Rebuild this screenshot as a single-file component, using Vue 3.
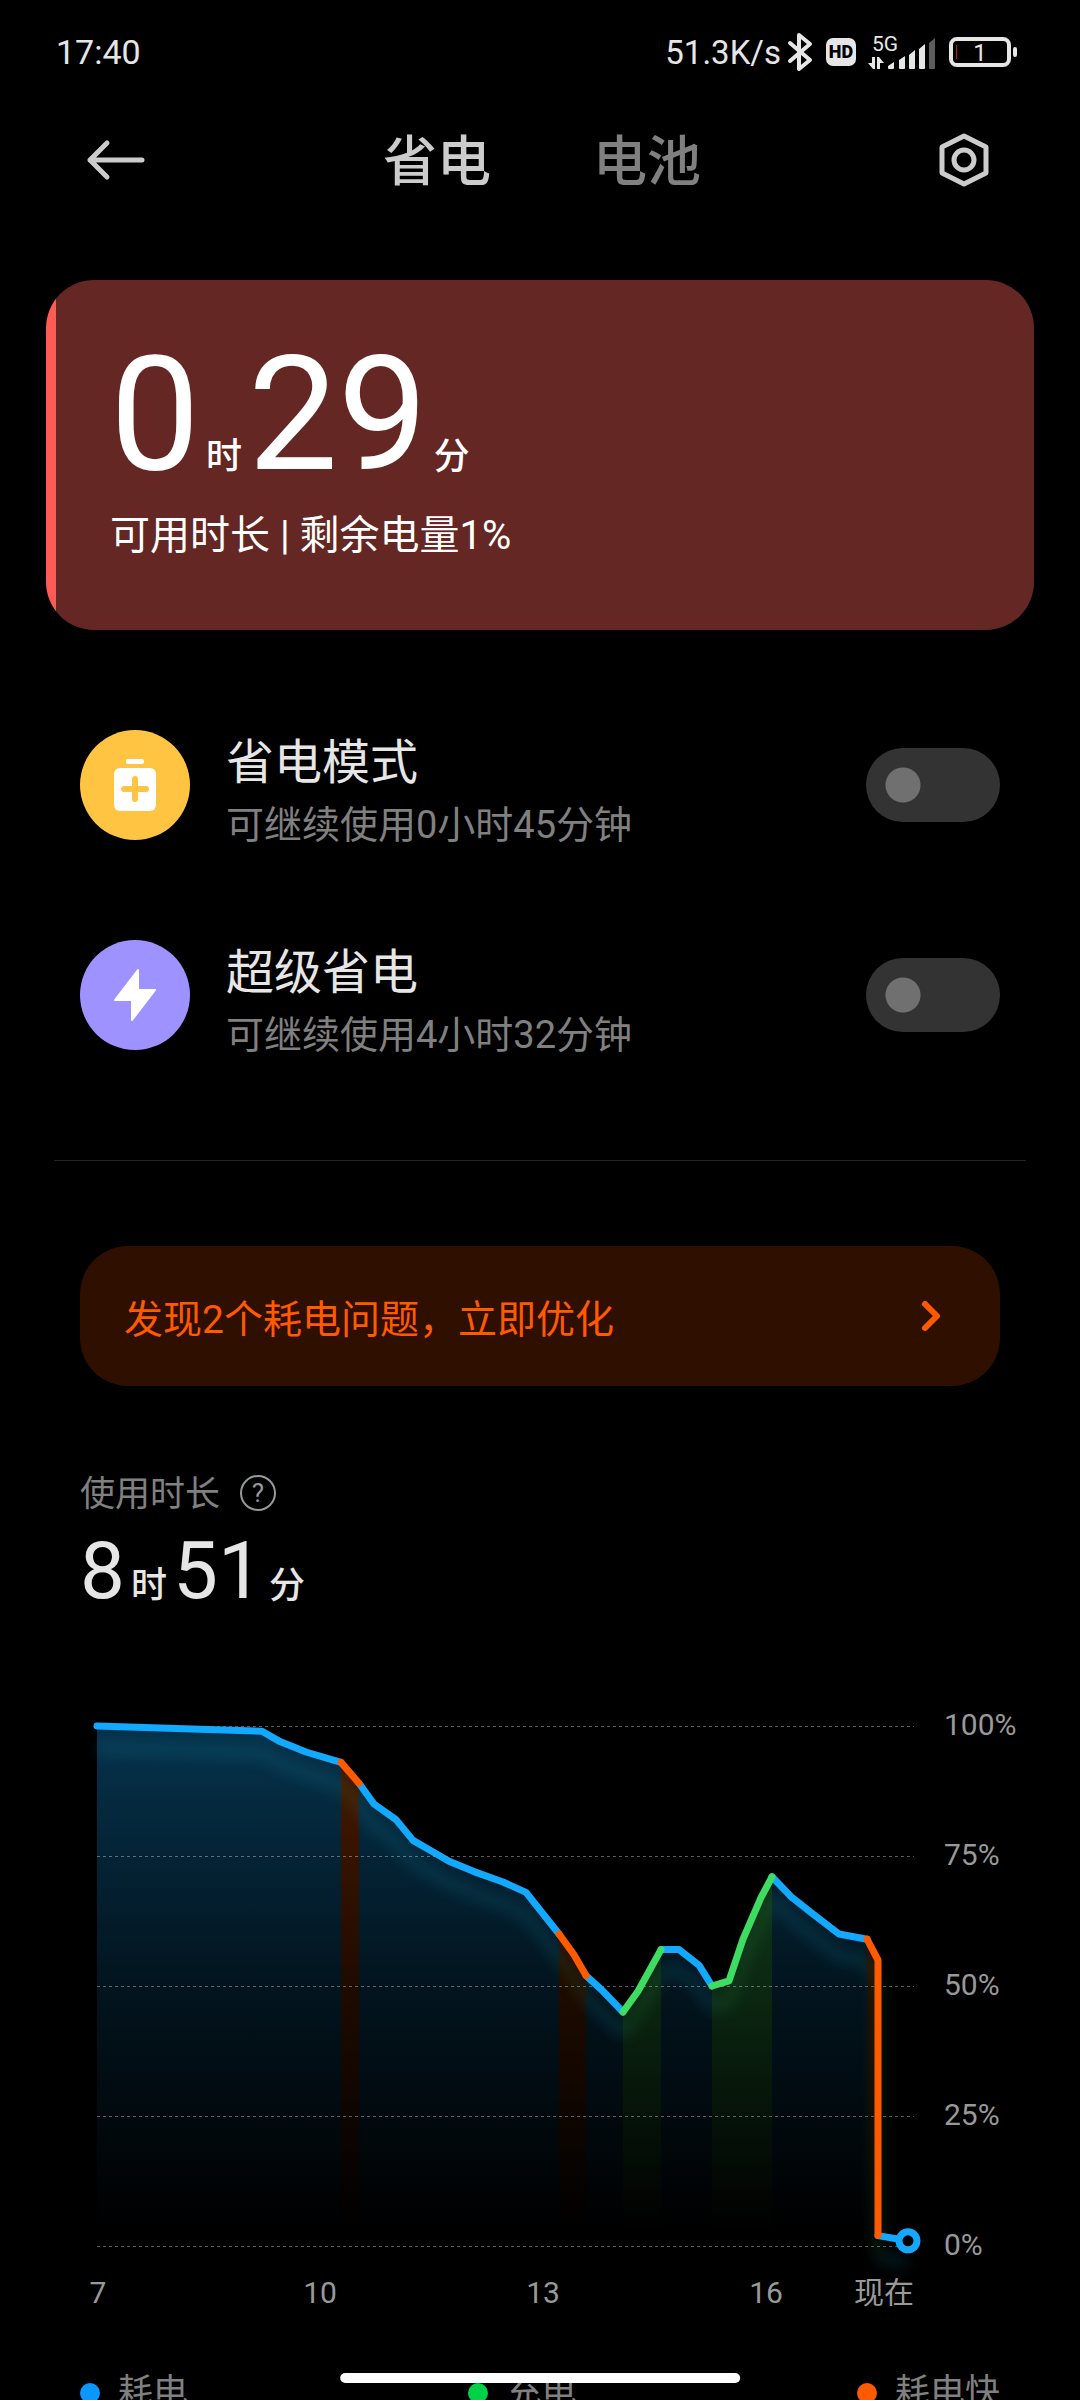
<script setup>
import { computed, ref } from 'vue'

const modes = ref([
  { id: 'saver', title: '省电模式', note: '可继续使用0小时45分钟', color: '#ffc542', on: false },
  { id: 'ultra', title: '超级省电', note: '可继续使用4小时32分钟', color: '#9d92ff', on: false },
])

const kinds = {
  drain: { color: '#12a9ff', top: 0.3, middle: 0.12 },
  fast: { color: '#ff5a00', top: 0.3, middle: 0.12 },
  charge: { color: '#3fdc62', top: 0.34, middle: 0.18 },
}

// Each point is [x, battery level]; a run shares its last point with the next run.
const runs = [
  { kind: 'drain', points: [[17, 100], [182, 99], [200, 97], [226, 95], [261, 93]] },
  { kind: 'drain', points: [[279, 89], [294, 85], [316, 82], [333, 78], [351, 76], [369, 74], [394, 72], [423, 70], [446, 68], [479, 60]] },
  { kind: 'drain', points: [[506, 52], [523, 49], [543, 45]] },
  { kind: 'drain', points: [[581, 57], [599, 57], [619, 54], [632, 50]] },
  { kind: 'drain', points: [[692, 71], [712, 67], [732, 64], [759, 60], [787, 59]] },
  { kind: 'drain', points: [[798, 2], [828, 1]] },
  { kind: 'charge', points: [[543, 45], [558, 49], [581, 57]] },
  { kind: 'charge', points: [[632, 50], [649, 51], [663, 59], [681, 67], [692, 71]] },
  { kind: 'fast', points: [[261, 93], [279, 89]] },
  { kind: 'fast', points: [[479, 60], [494, 56], [506, 52]] },
  { kind: 'fast', points: [[787, 59], [798, 55], [798, 2]] },
]

const BASE = 546
const levelY = (level) => BASE - (level * 52) / 10

const lines = computed(() =>
  runs.map((run) => {
    const coords = run.points.map(([x, level]) => `${x},${levelY(level)}`)
    const first = run.points[0][0]
    const last = run.points[run.points.length - 1][0]
    return {
      kind: run.kind,
      color: kinds[run.kind].color,
      line: coords.join(' '),
      area: `${first},${BASE} ${coords.join(' ')} ${last},${BASE}`,
    }
  }),
)

const levels = [100, 75, 50, 25, 0]
const hours = [
  { x: 18, label: '7' },
  { x: 240, label: '10' },
  { x: 463, label: '13' },
  { x: 686, label: '16' },
  { x: 804, label: '现在' },
]
const legend = [
  { label: '耗电', color: '#0a98ff' },
  { label: '充电', color: '#00d147' },
  { label: '耗电快', color: '#ff5a00' },
]
</script>

<template>
  <div class="screen">
    <div class="status">
      <span>17:40</span>
      <div class="indicators">
        <span class="speed">51.3K/s</span>
        <svg class="bluetooth" width="26" height="40" viewBox="0 0 26 40" fill="none" stroke="#e6e6e6" stroke-width="4" stroke-linejoin="round" stroke-linecap="round">
          <path d="M3 11 L23 28 L12 37 V3 L23 12 L3 29" />
        </svg>
        <span class="hd">HD</span>
        <svg class="signal" width="68" height="38" viewBox="0 0 68 38">
          <text x="4" y="18" font-size="21" fill="#e6e6e6">5G</text>
          <g fill="#e6e6e6">
            <path d="M4 24 h3 v12 h-2 L0 30 h4 Z M9 36 V24 h2 l5 6 h-4 v6 Z" />
            <path d="M20 33 L26 29 V35 q0 1 -1 1 H21 q-1 0 -1 -1 Z" />
            <path d="M31 27 L37 23 V35 q0 1 -1 1 H32 q-1 0 -1 -1 Z" />
            <path d="M41 22 L47 17 V35 q0 1 -1 1 H42 q-1 0 -1 -1 Z" />
            <path d="M51 16 L57 11 V35 q0 1 -1 1 H52 q-1 0 -1 -1 Z" />
          </g>
          <path fill="#5c5c5c" d="M61 10 L67 5 V35 q0 1 -1 1 H62 q-1 0 -1 -1 Z" />
        </svg>
        <svg class="battery" width="68" height="30" viewBox="0 0 68 30">
          <rect x="2" y="2" width="58" height="26" rx="6" fill="none" stroke="#e6e6e6" stroke-width="4" />
          <rect x="7" y="8" width="1" height="14" fill="#c01818" />
          <rect x="64" y="10" width="4" height="10" rx="2" fill="#e6e6e6" />
          <text x="31" y="24" font-size="24" text-anchor="middle" fill="#e6e6e6">1</text>
        </svg>
      </div>
    </div>

    <header class="header">
      <button class="icon-button" type="button" aria-label="返回">
        <svg width="58" height="40" viewBox="0 0 58 40" fill="none" stroke="#ccc" stroke-width="5" stroke-linecap="round" stroke-linejoin="round">
          <path d="M55 20 H3 M20 3 L3 20 L20 37" />
        </svg>
      </button>
      <nav class="tabs">
        <a href="#saver" class="active">省电</a>
        <a href="#battery">电池</a>
      </nav>
      <button class="icon-button" type="button" aria-label="设置">
        <svg width="50" height="54" viewBox="0 0 50 54" fill="none" stroke="#ccc" stroke-width="5" stroke-linejoin="round">
          <path d="M25 3 L47 14 V40 L25 51 L3 40 V14 Z" />
          <circle cx="25" cy="27" r="10" />
        </svg>
      </button>
    </header>

    <main class="content">
      <section class="remaining">
        <p class="duration large"><b>0</b><span>时</span><b>29</b><span>分</span></p>
        <p class="remaining-note">可用时长 | 剩余电量1%</p>
      </section>

      <section class="modes">
        <div v-for="mode in modes" :key="mode.id" class="mode">
          <span class="mode-icon" :style="{ background: mode.color }">
            <svg v-if="mode.id === 'saver'" width="42" height="52" viewBox="0 0 42 52">
              <rect x="12" y="0" width="18" height="5" rx="2" fill="#fff" />
              <rect x="0" y="9" width="42" height="43" rx="6" fill="#fff" />
              <path d="M21 20 V40 M10 30 H32" :stroke="mode.color" stroke-width="6" stroke-linecap="round" />
            </svg>
            <svg v-else width="44" height="54" viewBox="0 0 44 54">
              <path d="M25 2 V22 H42 L19 52 V32 H2 Z" fill="#fff" stroke="#fff" stroke-width="2" stroke-linejoin="round" />
            </svg>
          </span>
          <label class="mode-text" :for="mode.id">
            <span class="mode-title">{{ mode.title }}</span>
            <span class="mode-note">{{ mode.note }}</span>
          </label>
          <input :id="mode.id" v-model="mode.on" class="switch" type="checkbox" role="switch" />
        </div>
      </section>

      <hr class="divider" />

      <button class="banner" type="button">
        <span>发现2个耗电问题，立即优化</span>
        <svg width="20" height="32" viewBox="0 0 20 32" fill="none" stroke="#ff5a00" stroke-width="6" stroke-linecap="round" stroke-linejoin="round">
          <path d="M4 4 L16 16 L4 28" />
        </svg>
      </button>

      <section class="usage">
        <div class="usage-head">
          <h2 class="usage-title">使用时长</h2>
          <button class="help" type="button" aria-label="说明">?</button>
        </div>
        <p class="duration"><b>8</b><span>时</span><b>51</b><span>分</span></p>

        <svg class="chart" viewBox="0 0 960 620" role="img" aria-label="电量曲线">
          <defs>
            <linearGradient v-for="(style, kind) in kinds" :id="`fill-${kind}`" :key="kind" gradientUnits="userSpaceOnUse" x1="0" y1="26" x2="0" y2="546">
              <stop offset="0" :stop-color="style.color" :stop-opacity="style.top" />
              <stop offset="0.5" :stop-color="style.color" :stop-opacity="style.middle" />
              <stop offset="0.97" :stop-color="style.color" stop-opacity="0" />
            </linearGradient>
            <filter id="glow" filterUnits="userSpaceOnUse" x="0" y="0" width="880" height="620">
              <feGaussianBlur stdDeviation="7" />
            </filter>
          </defs>

          <polygon v-for="(run, i) in lines" :key="`a${i}`" :points="run.area" :fill="`url(#fill-${run.kind})`" />
          <g filter="url(#glow)" opacity="0.16" transform="translate(0 22)" fill="none" stroke-width="12">
            <polyline v-for="(run, i) in lines" :key="`g${i}`" :points="run.line" :stroke="run.kind === 'drain' ? '#1fa0c0' : '#2f9a50'" />
          </g>
          <line v-for="level in levels" :key="level" class="grid" x1="17" x2="834" :y1="levelY(level)" :y2="levelY(level)" />
          <polyline v-for="(run, i) in lines" :key="`l${i}`" class="curve" :points="run.line" :stroke="run.color" />
          <circle cx="828" :cy="levelY(1)" r="9" fill="#000" stroke="#12a9ff" stroke-width="7" />

          <text v-for="level in levels" :key="`t${level}`" x="864" :y="levelY(level) + 9">{{ level }}%</text>
          <text v-for="hour in hours" :key="hour.label" class="hour" :x="hour.x" y="603">{{ hour.label }}</text>
        </svg>

        <ul class="legend">
          <li v-for="item in legend" :key="item.label">
            <i :style="{ background: item.color }"></i>{{ item.label }}
          </li>
        </ul>
      </section>
    </main>

    <div class="home-bar"></div>
  </div>
</template>

<style>
body {
  margin: 0;
  background: #000;
}
</style>

<style scoped>
.screen {
  position: relative;
  display: flex;
  flex-direction: column;
  height: 100vh;
  overflow: hidden;
  background: #000;
  color: #e6e6e6;
  font-family: Roboto, "Noto Sans CJK SC", sans-serif;
}

p,
h2,
ul {
  margin: 0;
  padding: 0;
  font-weight: 400;
}

button {
  padding: 0;
  border: 0;
  background: none;
  color: inherit;
  font: inherit;
}

svg {
  display: block;
  flex: none;
  overflow: visible;
}

.status {
  display: flex;
  flex: none;
  align-items: center;
  justify-content: space-between;
  height: 104px;
  padding: 0 63px 0 56px;
  font-size: 34px;
}

.indicators {
  display: flex;
  align-items: center;
}

.speed {
  font-size: 33px;
}

.bluetooth {
  margin-left: 6px;
}

.hd {
  width: 30px;
  margin-left: 13px;
  border-radius: 7px;
  background: #e6e6e6;
  color: #000;
  font-size: 18px;
  font-weight: 900;
  line-height: 28px;
  text-align: center;
}

.signal {
  margin-left: 12px;
}

.battery {
  margin-left: 13px;
}

.header {
  display: flex;
  flex: none;
  align-items: center;
  justify-content: space-between;
  height: 112px;
  padding: 0 91px 0 87px;
}

.tabs {
  display: flex;
  gap: 102px;
  padding-top: 6px;
  font-size: 54px;
  font-weight: 500;
  line-height: 64px;
}

.tabs a {
  color: #808080;
  text-decoration: none;
}

.tabs .active {
  color: #ccc;
}

.content {
  flex: 1;
  min-height: 0;
  padding-top: 64px;
  overflow: hidden;
}

.remaining {
  margin: 0 46px;
  padding: 55px 56px 70px 64px;
  border-radius: 48px;
  background: linear-gradient(90deg, #ff5b54 10px, #652723 10px);
  color: #fff;
}

.duration {
  display: flex;
  align-items: baseline;
}

.duration b {
  font-size: 80px;
  font-weight: 400;
  line-height: 80px;
}

.duration.large b {
  font-size: 160px;
  line-height: 160px;
}

.duration span {
  margin: 0 6px;
  font-size: 36px;
  font-weight: 500;
  line-height: 36px;
}

.remaining-note {
  margin-top: 17px;
  font-size: 40px;
  line-height: 48px;
}

.modes {
  padding: 50px 80px 60px;
}

.mode {
  display: flex;
  align-items: center;
  height: 210px;
}

.mode-icon {
  display: flex;
  flex: none;
  align-items: center;
  justify-content: center;
  width: 110px;
  height: 110px;
  border-radius: 50%;
}

.mode-text {
  display: flex;
  flex: 1;
  flex-direction: column;
  margin-left: 36px;
  padding-top: 18px;
  line-height: 63px;
}

.mode-title {
  font-size: 48px;
}

.mode-note {
  color: #808080;
  font-size: 38px;
}

.switch {
  flex: none;
  width: 134px;
  height: 74px;
  margin: 0;
  border-radius: 37px;
  background: radial-gradient(circle at 37px 37px, #707070 17px, #333 18px);
  appearance: none;
}

.switch:checked {
  background: radial-gradient(circle at 97px 37px, #fff 17px, #12a9ff 18px);
}

.divider {
  height: 1px;
  margin: 0 54px;
  border: 0;
  background: #262626;
}

.banner {
  display: flex;
  align-items: center;
  justify-content: space-between;
  width: calc(100% - 160px);
  height: 140px;
  margin: 85px 80px 83px;
  padding: 0 59px 0 44px;
  border-radius: 48px;
  background: #2e0f00;
  color: #ff5a00;
  font-size: 39px;
}

.usage {
  padding: 0 40px 0 80px;
}

.usage-head {
  display: flex;
  align-items: center;
  gap: 20px;
  height: 48px;
  margin-bottom: 14px;
}

.usage-title {
  padding-top: 4px;
  color: #808080;
  font-size: 35px;
  line-height: 48px;
}

.help {
  box-sizing: border-box;
  width: 36px;
  height: 36px;
  border: 2px solid #999;
  border-radius: 50%;
  color: #999;
  font-size: 26px;
  line-height: 32px;
  text-align: center;
}

.chart {
  width: 100%;
  height: auto;
  margin-top: 89px;
  fill: #999;
  font-size: 30px;
}

.grid {
  stroke: #fff;
  stroke-opacity: 0.35;
  stroke-width: 1;
  stroke-dasharray: 3 3;
  shape-rendering: crispEdges;
}

.curve {
  fill: none;
  stroke-width: 7;
  stroke-linecap: round;
  stroke-linejoin: round;
}

.hour {
  text-anchor: middle;
}

.legend {
  display: flex;
  justify-content: space-between;
  margin: 49px 40px 0 0;
  color: #808080;
  font-size: 35px;
  line-height: 48px;
  list-style: none;
}

.legend li {
  display: flex;
  align-items: center;
  gap: 18px;
}

.legend i {
  width: 20px;
  height: 20px;
  border-radius: 50%;
}

.home-bar {
  position: absolute;
  bottom: 17px;
  left: 50%;
  width: 37%;
  height: 10px;
  border-radius: 5px;
  background: #fff;
  transform: translateX(-50%);
}
</style>
